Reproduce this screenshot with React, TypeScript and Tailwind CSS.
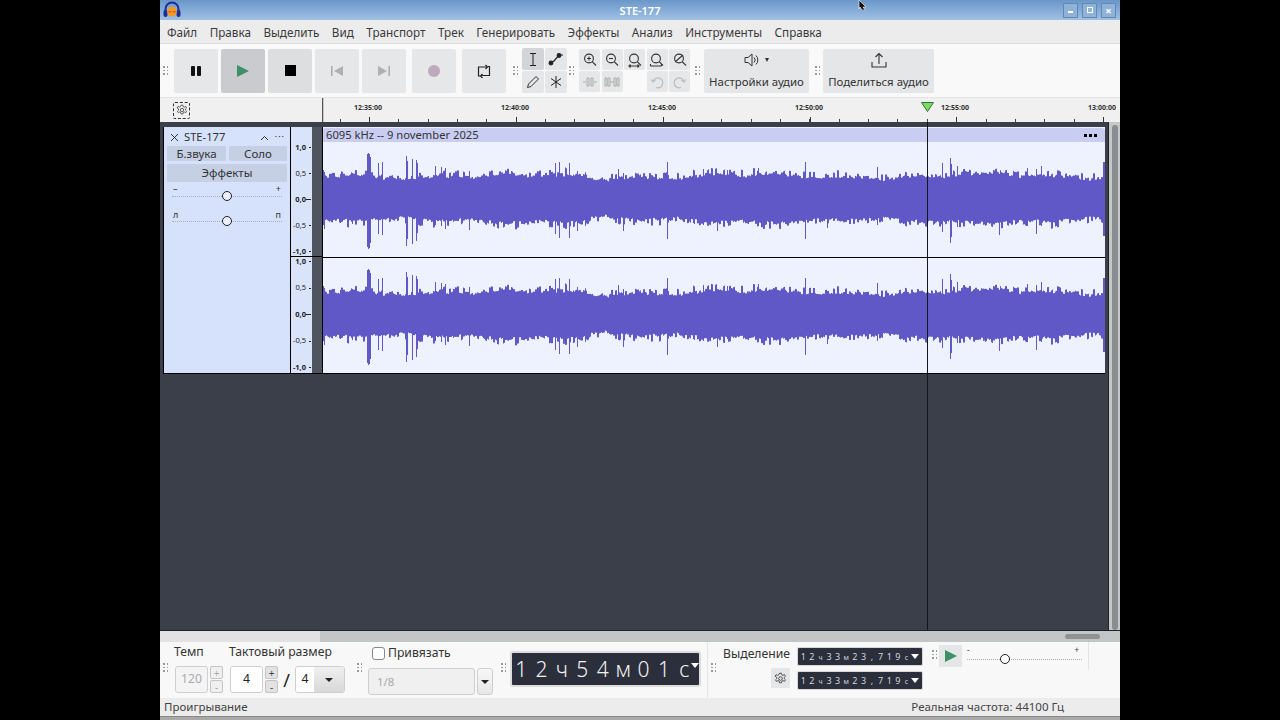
import React from "react";

const FONT = "font-['Noto_Sans','Open_Sans',sans-serif]";

function Grip({ className = "" }: { className?: string }) {
  return (
    <div className={"grid grid-cols-2 gap-[2px] w-[5px] h-fit shrink-0 " + className}>
      {[0, 1, 2, 3, 4, 5].map((i) => (
        <span key={i} className="w-[1.5px] h-[1.5px] bg-[#9a9a9a]" />
      ))}
    </div>
  );
}

function wavePath(w: number, c: number) {
  let s = 12345;
  const rnd = () => {
    s = (s * 16807) % 2147483647;
    return s / 2147483647;
  };
  const x0 = 323;
  const spikes: Record<number, [number, number]> = {
    323: [29, 26], 324: [27, 30], 340: [25, 24], 352: [26, 25], 367: [45, 48], 368: [46, 50], 369: [45, 49], 370: [42, 44],
    378: [36, 35], 382: [37, 36], 406: [43, 47], 407: [38, 40], 412: [40, 45], 416: [39, 42], 417: [36, 34],
    435: [33, 26], 441: [32, 27], 445: [31, 30], 469: [28, 31],
    555: [36, 35], 559: [37, 39], 569: [36, 39], 577: [28, 32], 618: [30, 25], 623: [26, 32], 667: [37, 40], 703: [30, 26], 717: [26, 32], 727: [29, 24], 758: [31, 27],
    805: [37, 40], 827: [24, 29], 877: [32, 26], 942: [36, 33], 950: [41, 44], 951: [35, 38], 957: [33, 28], 999: [25, 36], 1027: [31, 27], 1036: [30, 35], 1041: [33, 27],
    1103: [37, 37], 1104: [37, 37],
  };
  let d = "";
  let hold = 0;
  let holdDn = 0;
  for (let i = 0; i < w; i++) {
    const x = i + x0;
    const env = 20.500 + 1.800 * Math.sin(x / 37) + 1.200 * Math.sin(x / 11) - (Math.abs(x - 597) < 12 ? 2 : 0);
    if (i % 2 === 0) {
      hold = rnd() * 3 + (rnd() > 0.6 ? rnd() * 6 : 0);
      holdDn = rnd() * 3 + (rnd() > 0.6 ? rnd() * 6 : 0);
    }
    let up = env + hold + rnd();
    let dn = env + holdDn + rnd() - 1;
    const sp = spikes[x];
    if (sp) {
      up = sp[0];
      dn = sp[1];
    }
    d += `M${i + 0.5} ${(c - up).toFixed(1)}V${(c + dn).toFixed(1)}`;
  }
  return d;
}

function Waveform() {
  const w = 782;
  return (
    <svg width={w} height={115} className="block shrink-0">
      <path d={wavePath(w, 57)} stroke="#5f58c6" strokeWidth={1} fill="none" />
    </svg>
  );
}

const T = "w-[44px] h-[44px] rounded-[2px] flex items-center justify-center shrink-0";

function Ruler() {
  const labels = [
    ["12:35:00", 46],
    ["12:40:00", 193],
    ["12:45:00", 340],
    ["12:50:00", 487],
    ["12:55:00", 633],
    ["13:00:00", 780],
  ] as const;
  const major = [0, 47, 194, 341, 488, 634, 781];
  const ticks: number[] = [];
  for (let x = 47 - 29.4; x < 798; x += 29.36) ticks.push(Math.round(x));
  return (
    <svg width={798} height={24} className="block">
      {ticks.map((x) => (
        <line key={x} x1={x + 0.5} x2={x + 0.5} y1={21} y2={24} stroke="#444" />
      ))}
      {major.map((x) => (
        <line key={x} x1={x + 0.5} x2={x + 0.5} y1={x === 0 ? 0 : 19} y2={24} stroke={x === 0 ? "#555" : "#333"} strokeWidth={x === 0 ? 1.5 : 1} />
      ))}
      {labels.map(([t, x]) => (
        <text key={t} x={x} y={11.600} textAnchor="middle" fontSize={7} fontWeight={700} fill="#333" fontFamily="'Noto Sans',sans-serif">
          {t}
        </text>
      ))}
      <path d="M599.500 4.500H611.500L605.500 13.500Z" fill="#7fd85f" stroke="#2f7a3a" strokeWidth={1} />
    </svg>
  );
}

function VRuler({ h }: { h: string }) {
  const labels: [string, boolean][] = [["1,0", true], ["0,5", false], ["0,0", true], ["-0,5", false], ["-1,0", true]];
  return (
    <div className={"flex flex-col justify-between text-[7.5px] text-[#222] leading-none " + h}>
      {labels.map(([l, b]) => (
        <div key={l} className={"h-[9px] w-full flex items-center justify-end pr-[1px] " + (b ? "font-bold" : "font-normal")}>
          <span>{l}</span>
          <span className={"h-[1px] bg-[#222] " + (b && l === "0,0" ? "w-[5px]" : "w-[2px] ml-[3px]")} />
        </div>
      ))}
    </div>
  );
}

function IconSvg({ children, size = 16 }: { children: React.ReactNode; size?: number }) {
  return (
    <svg width={size} height={size} viewBox="0 0 16 16" fill="none" stroke="#333" strokeWidth={1.1}>
      {children}
    </svg>
  );
}

function Mag({ extra }: { extra?: React.ReactNode }) {
  return (
    <IconSvg>
      <circle cx="7" cy="6.500" r="4.400" />
      <path d="M10.200 9.700L14 13.500" />
      {extra}
    </IconSvg>
  );
}

function Gear({ size = 14 }: { size?: number }) {
  return (
    <svg width={size} height={size} viewBox="0 0 16 16" fill="none" stroke="#333" strokeWidth={1}>
      <path d="M6.800 1.500h2.400l.4 2 1.500.7 1.800-1 1.200 2-1.500 1.400v1.600l1.500 1.400-1.200 2-1.800-1-1.500.7-.4 2H6.800l-.4-2-1.500-.7-1.800 1-1.200-2 1.500-1.400V6.600L1.400 5.200l1.200-2 1.800 1 1.500-.7z" />
      <circle cx="8" cy="8" r="2.200" />
    </svg>
  );
}

const SMALL = ["1", "2", "ч", "3", "3", "м", "2", "3", ",", "7", "1", "9", "с"];
function SmallTime() {
  return (
    <div className="h-[19px] w-[126px] bg-[#2b2e3b] border border-[#d8d8d8] rounded-[2px] flex items-center text-[#d4d6dc] text-[9px] leading-none">
      <span className="flex items-center pl-[1px]">
        {SMALL.map((c, i) => (
          <span key={i} className={"w-[8.600px] text-center " + (/[чмс]/.test(c) ? "text-[7px] pt-[1px]" : "")}>{c}</span>
        ))}
      </span>
      <span className="ml-auto mr-[3px] w-0 h-0 border-l-[4px] border-r-[4px] border-t-[5px] border-l-transparent border-r-transparent border-t-white" />
    </div>
  );
}

function StepBtn({ t, off }: { t: string; off?: boolean }) {
  return (
    <div className={"w-[13px] h-[13px] rounded-[2px] border border-[#c4c4c4] flex items-center justify-center text-[10px] leading-none " + (off ? "bg-[#f0f0f0] text-[#aaa]" : "bg-[#e2e2e2] text-[#444]")}>
      {t}
    </div>
  );
}

const BIG = ["1", "2", "ч", "5", "4", "м", "0", "1", "с"];

export default function App() {
  return (
    <div className={"w-[1280px] h-[720px] bg-black flex justify-center overflow-hidden relative " + FONT}>
      <div className="w-[960px] h-[720px] flex flex-col bg-[#f8f8f8] text-[#333] relative">
        {/* title bar */}
        <div className="h-[20px] flex items-center bg-gradient-to-b from-[#6a97c9] to-[#a0c0e3] pl-[3px] pr-[4px] shrink-0">
          <svg width="18" height="18" viewBox="0 0 18 18">
            <path d="M2.500 10V8a6.500 6.500 0 0 1 13 0v2" fill="none" stroke="#1d2c94" strokeWidth="2" />
            <rect x="0.500" y="9" width="4" height="7" rx="2" fill="#1d2c94" />
            <rect x="13.500" y="9" width="4" height="7" rx="2" fill="#1d2c94" />
            <circle cx="9" cy="10.500" r="4.800" fill="#f39a1e" />
            <path d="M4.500 10.500h9l-2.500 1-2-1-2 1z" fill="#d8232a" />
          </svg>
          <div className="flex-1 text-center text-white text-[11px] font-semibold pl-[36px] leading-none">STE-177</div>
          <div className="flex gap-[4px]">
            {[
              <span key="a" className="w-[5px] h-[2px] bg-white mt-[4px]" />,
              <span key="b" className="w-[6px] h-[6px] border border-white" />,
              <span key="c" className="text-white text-[11px] font-bold leading-none">×</span>,
            ].map((c, i) => (
              <div key={i} className="w-[15px] h-[15px] border border-[#5f8ab8] bg-[#8fb2d8] flex items-center justify-center">
                {c}
              </div>
            ))}
          </div>
        </div>
        {/* menu */}
        <div className="h-[24px] pt-[2px] bg-[#ececec] border-b border-[#dcdcdc] flex items-center pl-[7px] gap-[12.500px] text-[11.700px] text-[#3a3a3a] shrink-0">
          {["Файл", "Правка", "Выделить", "Вид", "Транспорт", "Трек", "Генерировать", "Эффекты", "Анализ", "Инструменты", "Справка"].map((m) => (
            <span key={m}>{m}</span>
          ))}
        </div>
        {/* toolbar */}
        <div className="h-[54px] flex items-center bg-[#f9f9f9] border-b border-[#e4e4e4] shrink-0">
          <Grip className="ml-[3px] mr-[6px]" />
          <div className="flex gap-[3px]">
            <div className={T + " bg-[#e6e7e8]"}>
              <svg width="12" height="12" viewBox="0 0 12 12"><rect x="1" y="1" width="4" height="10" rx="1" fill="#111" /><rect x="7" y="1" width="4" height="10" rx="1" fill="#111" /></svg>
            </div>
            <div className={T + " bg-[#c9cbce]"}>
              <svg width="14" height="14" viewBox="0 0 14 14"><path d="M1 1L13 7L1 13Z" fill="#3f8f68" /></svg>
            </div>
            <div className={T + " bg-[#dcdee0]"}>
              <div className="w-[11px] h-[11px] bg-black" />
            </div>
            <div className={T + " bg-[#e6e7e8]"}>
              <svg width="14" height="12" viewBox="0 0 14 12"><rect x="1" y="1" width="1.500" height="10" fill="#aaa" /><path d="M13 1V11L4 6Z" fill="#b0b0b0" /></svg>
            </div>
            <div className={T + " bg-[#e6e7e8]"}>
              <svg width="14" height="12" viewBox="0 0 14 12"><rect x="11.500" y="1" width="1.500" height="10" fill="#aaa" /><path d="M1 1V11L10 6Z" fill="#b0b0b0" /></svg>
            </div>
            <div className={T + " bg-[#e6e7e8] ml-[3px]"}>
              <div className="w-[12px] h-[12px] rounded-full bg-[#bfa9bd]" />
            </div>
            <div className={T + " bg-[#e6e7e8] ml-[3px]"}>
              <svg width="14" height="14" viewBox="0 0 14 14" fill="none" stroke="#222" strokeWidth="1.200">
                <path d="M3 12H1.500V3H10" /><path d="M8.500 1L10.500 3L8.500 5" /><path d="M11 2.500h1.500v9H4" /><path d="M5.500 14L3.500 12L5.500 10" />
              </svg>
            </div>
          </div>
          <Grip className="ml-[7px] mr-[4px]" />
          <div className="grid grid-cols-[22px_22px] grid-rows-[22px_22px] gap-[1px]">
            <div className="bg-[#d2d4d8] rounded-[2px] flex items-center justify-center">
              <svg width="10" height="15" viewBox="0 0 10 15" fill="none" stroke="#222"><path d="M2 1.500h6M2 13.500h6M5 1.500v12" /></svg>
            </div>
            <div className="bg-[#e4e6e8] rounded-[2px] flex items-center justify-center">
              <svg width="16" height="14" viewBox="0 0 16 14" fill="none" stroke="#222" strokeWidth="1.200"><path d="M1 12L6 9L11 3H15" /><circle cx="3" cy="11" r="1.800" fill="#222" /><circle cx="11" cy="3.500" r="1.800" fill="#222" /></svg>
            </div>
            <div className="bg-[#e4e6e8] rounded-[2px] flex items-center justify-center">
              <svg width="14" height="14" viewBox="0 0 14 14" fill="none" stroke="#333"><path d="M1.500 12.500L2.500 9L10 1.500L12.500 4L5 11.500Z" /></svg>
            </div>
            <div className="bg-[#e4e6e8] rounded-[2px] flex items-center justify-center">
              <svg width="14" height="14" viewBox="0 0 14 14" fill="none" stroke="#222"><path d="M7 1V13M2 3.500L12 10.500M12 3.500L2 10.500" /></svg>
            </div>
          </div>
          <Grip className="ml-[2px] mr-[5px]" />
          <div className="grid grid-cols-[21px_21px_21px_21px_21px] grid-rows-[21px_21px] gap-x-[1.500px] gap-y-[1px]">
            <div className="bg-[#e6e7e8] rounded-[2px] flex items-center justify-center"><Mag extra={<path d="M5 6.500h4M7 4.500v4" />} /></div>
            <div className="bg-[#e6e7e8] rounded-[2px] flex items-center justify-center"><Mag extra={<path d="M5 6.500h4" />} /></div>
            <div className="bg-[#e6e7e8] rounded-[2px] flex items-center justify-center"><Mag extra={<path d="M2 14h10M3.500 12.500L2 14L3.500 15.500M10.500 12.500L12 14L10.500 15.500" />} /></div>
            <div className="bg-[#e6e7e8] rounded-[2px] flex items-center justify-center"><Mag extra={<path d="M1.500 14h11M1.500 12v2M12.500 12v2" />} /></div>
            <div className="bg-[#e6e7e8] rounded-[2px] flex items-center justify-center"><Mag extra={<path d="M3 10L11 3" />} /></div>
            <div className="bg-[#e6e7e8] rounded-[2px] flex items-center justify-center">
              <svg width="16" height="14" viewBox="0 0 16 14" fill="none" stroke="#aaa"><path d="M1 7h3M12 7h3M5 3h2v8H5zM9 3h2v8H9z" /></svg>
            </div>
            <div className="bg-[#e6e7e8] rounded-[2px] flex items-center justify-center">
              <svg width="16" height="14" viewBox="0 0 16 14" fill="none" stroke="#aaa"><path d="M6 7h4M1 3h2v8H1zM4 3h2v8H4zM10 3h2v8h-2zM13 3h2v8h-2z" /></svg>
            </div>
            <div />
            <div className="bg-[#e6e7e8] rounded-[2px] flex items-center justify-center">
              <svg width="14" height="14" viewBox="0 0 14 14" fill="none" stroke="#bbb" strokeWidth="1.200"><path d="M3 6.500A5 5 0 1 1 6 12.500" /><path d="M1 4.500L3 7L5.500 5" /></svg>
            </div>
            <div className="bg-[#e6e7e8] rounded-[2px] flex items-center justify-center">
              <svg width="14" height="14" viewBox="0 0 14 14" fill="none" stroke="#bbb" strokeWidth="1.200"><path d="M11 6.500A5 5 0 1 0 8 12.500" /><path d="M13 4.500L11 7L8.500 5" /></svg>
            </div>
          </div>
          <Grip className="ml-[5px] mr-[4px]" />
          <div className="w-[105px] h-[44px] bg-[#e4e6e8] rounded-[2px] flex flex-col items-center justify-between pt-[3px] pb-[3px]">
            <div className="flex items-center gap-[3px] h-[16px]">
              <svg width="18" height="16" viewBox="0 0 18 16" fill="none" stroke="#333"><path d="M1 5.500h3L8 2V14L4 10.500H1z" /><path d="M10 5.500a3.500 3.500 0 0 1 0 5M12 3.500a6.500 6.500 0 0 1 0 9" /></svg>
              <span className="w-0 h-0 border-l-[2.500px] border-r-[2.500px] border-t-[4px] border-l-transparent border-r-transparent border-t-[#333]" />
            </div>
            <span className="text-[11.400px] leading-[16px] whitespace-nowrap text-[#333]">Настройки аудио</span>
          </div>
          <Grip className="ml-[6px] mr-[3px]" />
          <div className="w-[111px] h-[44px] bg-[#e4e6e8] rounded-[2px] flex flex-col items-center justify-between pt-[3px] pb-[3px]">
            <svg width="18" height="17" viewBox="0 0 18 17" fill="none" stroke="#333" strokeWidth="1.100"><path d="M2 10V15H16V10" /><path d="M9 12V2M5.500 5L9 1.500L12.500 5" /></svg>
            <span className="text-[11.400px] leading-[16px] whitespace-nowrap text-[#333]">Поделиться аудио</span>
          </div>
        </div>
        {/* ruler */}
        <div className="h-[24px] flex bg-[#f0f0f0] shrink-0">
          <div className="w-[162px] flex items-center pl-[13px] shrink-0">
            <div className="w-[17px] h-[17px] border border-dashed border-[#333] rounded-[2px] flex items-center justify-center">
              <Gear size={12} />
            </div>
          </div>
          <Ruler />
        </div>
        {/* tracks area */}
        <div className="flex-1 bg-[#3a3f4a] flex min-h-0 relative">
          <div className="flex-1 min-w-0 pl-[3px] pt-[5px]">
            <div className="flex h-[247px] bg-black w-[942px] pl-[1px] pr-[1px] pb-[1px]">
              {/* panel */}
              <div className="w-[126px] shrink-0 bg-[#d6e2fb] flex flex-col px-[3px] text-[#333]">
                <div className="h-[19px] pt-[2px] flex items-center text-[11.200px]">
                  <span className="w-[9px] h-[9px] ml-[3px] mr-[5px] flex items-center justify-center">
                    <svg width="9" height="9" viewBox="0 0 9 9" stroke="#333"><path d="M1 1L8 8M8 1L1 8" /></svg>
                  </span>
                  <span>STE-177</span>
                  <svg width="9" height="6" viewBox="0 0 9 6" className="ml-auto mr-[6px]" fill="none" stroke="#333"><path d="M1 5L4.500 1.500L8 5" /></svg>
                  <span className="tracking-[1px] text-[9px] leading-none -mt-[3px] mr-[2px]">···</span>
                </div>
                <div className="flex gap-[3px]">
                  <div className="w-[59px] h-[15px] bg-[#c5d0e5] rounded-[1px] flex items-center justify-center text-[11.500px]">Б.звука</div>
                  <div className="w-[58px] h-[15px] bg-[#c5d0e5] rounded-[1px] flex items-center justify-center text-[11.500px]">Соло</div>
                </div>
                <div className="h-[18px] mt-[3px] bg-[#c5d0e5] rounded-[1px] flex items-center justify-center text-[11.500px]">Эффекты</div>
                <div className="flex justify-between text-[9px] leading-none mt-[2px] px-[6px]"><span>–</span><span>+</span></div>
                <div className="h-[8px] mx-[5px] -mt-[1px] relative flex items-center">
                  <div className="w-full border-t border-dotted border-[#aab]" />
                  <span className="absolute left-[50px] w-[10px] h-[10px] rounded-full bg-[#eef] border-[1.500px] border-[#222]" />
                </div>
                <div className="flex justify-between text-[9px] leading-none mt-[10px] px-[6px]"><span>л</span><span>п</span></div>
                <div className="h-[8px] mx-[5px] -mt-[2px] relative flex items-center">
                  <div className="w-full border-t border-dotted border-[#aab]" />
                  <span className="absolute left-[50px] w-[10px] h-[10px] rounded-full bg-[#eef] border-[1.500px] border-[#222]" />
                </div>
              </div>
              {/* vruler */}
              <div className="w-[21px] ml-[1px] shrink-0 bg-[#d9e4fb] flex flex-col">
                <div className="h-[16px] shrink-0" />
                <VRuler h="h-[113px]" />
                <div className="h-[1px] bg-black shrink-0" />
                <VRuler h="h-[115px]" />
              </div>
              {/* gutter */}
              <div className="w-[10px] shrink-0 bg-[#50545f] flex flex-col">
                <div className="h-[130px] border-b border-black" />
              </div>
              <div className="w-[1px] bg-black shrink-0" />
              {/* clip */}
              <div className="w-[782px] shrink-0 bg-[#eef1fe] flex flex-col">
                <div className="h-[14px] mt-[1px] pt-[1px] bg-[#c9cdf2] flex items-center justify-between pl-[3px] pr-[8px] text-[11.200px] text-[#333] rounded-t-[3px] shrink-0">
                  <span>6095 kHz -- 9 november 2025</span>
                  <span className="flex gap-[2px]"><i className="w-[3px] h-[3px] bg-black" /><i className="w-[3px] h-[3px] bg-black" /><i className="w-[3px] h-[3px] bg-black" /></span>
                </div>
                <Waveform />
                <div className="h-[1px] bg-black shrink-0" />
                <Waveform />
              </div>
            </div>
          </div>
          <div className="w-[12px] shrink-0 bg-[#c5c8c8] flex justify-center border-l border-[#222] pt-[3px]">
            <div className="w-[6px] bg-[#8a8d8f] rounded-[3px]" />
          </div>
          {/* playhead */}
          <div className="absolute left-[767px] top-0 bottom-0 w-[1px] bg-[#15161a]" />
        </div>
        {/* hscroll */}
        <div className="h-[12px] flex bg-[#c3c6c6] shrink-0 border-t border-[#20232a]">
          <div className="w-[160px] bg-[#e2e2e2]" />
          <div className="w-[745px]" />
          <div className="w-[35px] h-[5px] mt-[3px] bg-[#8f9292] rounded-[3px]" />
        </div>
        {/* bottom tools */}
        <div className="h-[56px] flex bg-[#f8f8f8] shrink-0 text-[12.200px] text-[#333]">
          <Grip className="ml-[3px] mr-[6px] mt-[21px]" />
          <div className="w-[55px] flex flex-col">
            <div className="h-[24px] pt-[2px] leading-[16px]">Темп</div>
            <div className="flex gap-[2px] ml-[1px]">
              <div className="w-[33px] h-[27px] border border-[#cfcfcf] rounded-[3px] flex items-center justify-center text-[#aaa] bg-[#f4f4f4]">120</div>
              <div className="flex flex-col gap-[1px]"><StepBtn t="+" off /><StepBtn t="-" off /></div>
            </div>
          </div>
          <div className="w-[128px] flex flex-col">
            <div className="h-[24px] pt-[2px] leading-[16px] whitespace-nowrap">Тактовый размер</div>
            <div className="flex items-center h-[27px] ml-[1px]">
              <div className="w-[33px] h-[27px] bg-white border border-[#cfcfcf] rounded-[3px] flex items-center justify-center text-[#222]">4</div>
              <div className="flex flex-col gap-[1px] ml-[2px]"><StepBtn t="+" /><StepBtn t="-" /></div>
              <span className="w-[17px] text-center text-[18px] leading-none text-[#222]">/</span>
              <div className="w-[50px] h-[27px] shrink-0 border border-[#cfcfcf] rounded-[3px] flex overflow-hidden">
                <div className="w-[18px] bg-white flex items-center justify-center text-[#222]">4</div>
                <div className="flex-1 bg-gradient-to-b from-[#f0f0f0] to-[#d8d8d8] flex items-center justify-center">
                  <span className="w-0 h-0 border-l-[4px] border-r-[4px] border-t-[4px] border-l-transparent border-r-transparent border-t-[#222]" />
                </div>
              </div>
            </div>
          </div>
          <Grip className="mr-[6px] mt-[21px]" />
          <div className="w-[125px] flex flex-col">
            <div className="h-[23px] mb-[3px] flex items-center gap-[3px] ml-[4px]">
              <span className="w-[13px] h-[13px] border border-[#888] rounded-[3px] bg-white" />
              <span>Привязать</span>
            </div>
            <div className="flex gap-[2px]">
              <div className="w-[107px] h-[27px] bg-[#f0f0f0] border border-[#cfcfcf] rounded-[3px] flex items-center pl-[8px] text-[#aaa] text-[11.500px]">1/8</div>
              <div className="w-[16px] h-[27px] border border-[#cfcfcf] rounded-[3px] bg-gradient-to-b from-[#f8f8f8] to-[#e6e6e6] flex items-center justify-center">
                <span className="w-0 h-0 border-l-[4px] border-r-[4px] border-t-[4px] border-l-transparent border-r-transparent border-t-[#222]" />
              </div>
            </div>
          </div>
          <Grip className="ml-[8px] mr-[4px] mt-[21px]" />
          <div className="w-[191px] h-[36px] mt-[9px] bg-[#2b2e3b] border-2 border-[#dcdcdc] rounded-[3px] flex items-center text-[#f2f2f2] relative">
            <span className="flex items-center text-[21px] leading-none font-light -ml-[1px]">
              {BIG.map((c, i) => (
                <span key={i} className="w-[20.400px] text-center">{c}</span>
              ))}
            </span>
            <span className="absolute right-0 top-[10px] w-0 h-0 border-l-[4px] border-r-[4px] border-t-[5px] border-l-transparent border-r-transparent border-t-white" />
          </div>
          <div className="w-[1px] h-[56px] bg-[#e4e4e4] ml-[6px]" />
          <Grip className="ml-[3px] mt-[21px]" />
          <div className="w-[81px] flex flex-col items-end pr-[7px]">
            <div className="h-[26px] pt-[4px] leading-[16px] whitespace-nowrap">Выделение</div>
            <div className="w-[19px] h-[20px] bg-[#e4e6e8] flex items-center justify-center"><Gear size={13} /></div>
          </div>
          <div className="flex flex-col gap-[5px] pt-[5px]">
            <SmallTime />
            <SmallTime />
          </div>
          <Grip className="ml-[9px] mt-[8px]" />
          <div className="w-[23px] h-[22px] ml-[2px] mt-[3px] bg-[#e4e6e8] flex items-center justify-center">
            <svg width="14" height="14" viewBox="0 0 14 14"><path d="M1 1L13 7L1 13Z" fill="#3f8f68" /></svg>
          </div>
          <div className="w-[115px] ml-[5px] mt-[4px] flex flex-col relative text-[8px] leading-none text-[#333] h-[20px]">
            <div className="flex justify-between pr-[3px]"><span>-</span><span>+</span></div>
            <div className="mt-[5px] border-t border-dotted border-[#aaa]" />
            <span className="absolute left-[33px] top-[8px] w-[10px] h-[10px] rounded-full bg-white border-[1.500px] border-[#222]" />
          </div>
          <div className="w-[1px] h-[28px] bg-[#e4e4e4] ml-[6px]" />
        </div>
        {/* status */}
        <div className="h-[18px] bg-[#ececec] flex items-center justify-between pl-[4px] pr-[56px] text-[11.500px] text-[#444] shrink-0">
          <span>Проигрывание</span>
          <span>Реальная частота: 44100 Гц</span>
        </div>
        <div className="h-[4px] bg-[#a9a9a9] border-t border-[#888] shrink-0" />
      </div>
      {/* cursor */}
      <svg width="11" height="10" viewBox="0 0 11 10" className="absolute left-[858px] top-0">
        <path d="M1 0L8 7H5L7 10H4L2 7L1 9Z" fill="#111" stroke="#fff" strokeWidth="0.600" />
      </svg>
    </div>
  );
}
